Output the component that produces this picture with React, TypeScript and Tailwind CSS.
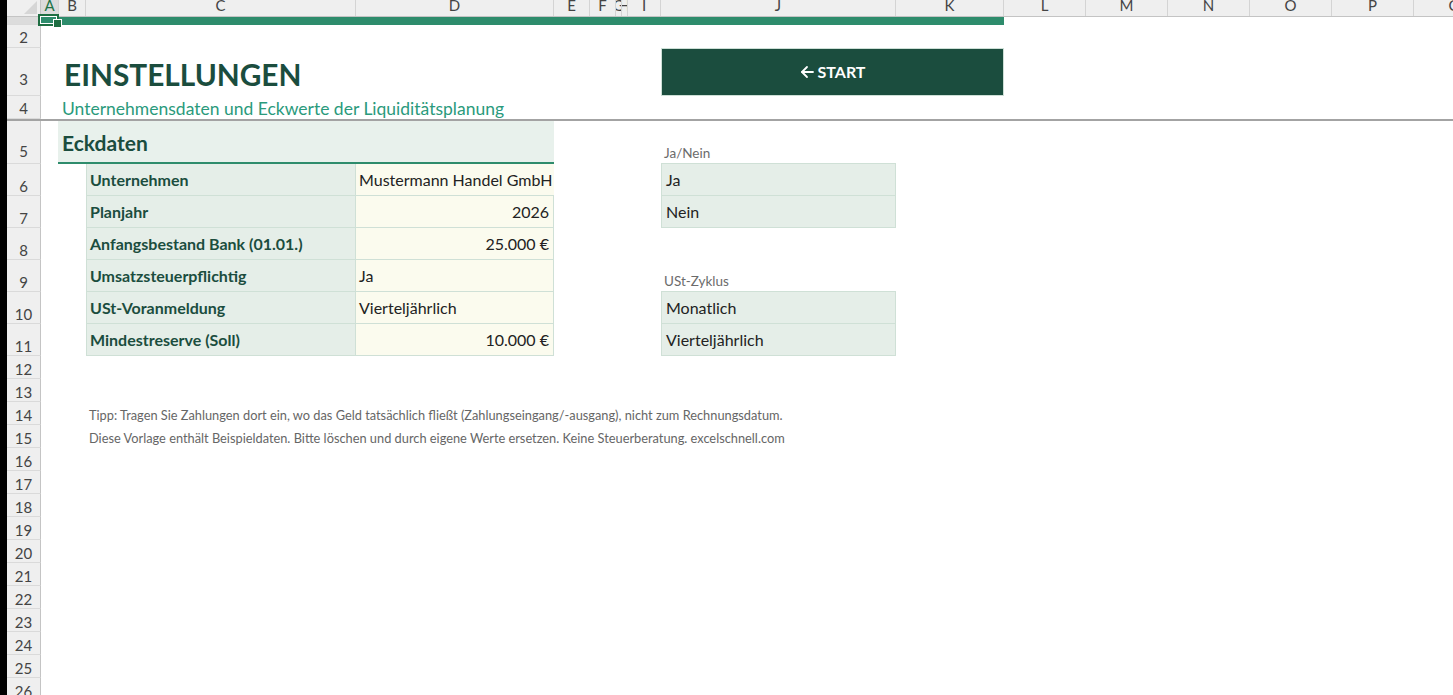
import React from "react";

const COLS: { k: string; w: string; sel?: boolean }[] = [
  { k: "A", w: "w-[18px]", sel: true },
  { k: "B", w: "w-[27px]" },
  { k: "C", w: "w-[270px]" },
  { k: "D", w: "w-[198px]" },
  { k: "E", w: "w-[36px]" },
  { k: "F", w: "w-[26px]" },
  { k: "G", w: "w-[6px]" },
  { k: "H", w: "w-[6px]" },
  { k: "I", w: "w-[33px]" },
  { k: "J", w: "w-[235px]" },
  { k: "K", w: "w-[108px]" },
  { k: "L", w: "w-[82px]" },
  { k: "M", w: "w-[82px]" },
  { k: "N", w: "w-[82px]" },
  { k: "O", w: "w-[82px]" },
  { k: "P", w: "w-[82px]" },
  { k: "Q", w: "w-[82px]" },
];

function ColumnHeader() {
  return (
    <div className="flex h-[17px] shrink-0 bg-[#efefef] border-b border-[#c4c4c4]">
      <div className="w-[34px] shrink-0 border-r border-[#c4c4c4] flex items-end justify-end pr-[3px] pb-[2px]">
        <svg width="14" height="13" viewBox="0 0 14 13">
          <polygon points="14,0 14,13 1,13" fill="#d6d6d6" />
        </svg>
      </div>
      {COLS.map((c) => (
        <div
          key={c.k}
          className={`${c.w} shrink-0 overflow-hidden flex justify-center items-end border-r border-[#d4d4d4] text-[15px] leading-[15px] pb-[3px] ${
            c.sel ? "bg-[#dcdcdc] text-[#217346]" : "text-[#444]"
          }`}
        >
          {c.k}
        </div>
      ))}
    </div>
  );
}

function Row({
  n,
  h,
  pb = "pb-[1px]",
  sel,
  children,
}: {
  n: string;
  h: string;
  pb?: string;
  sel?: boolean;
  children?: React.ReactNode;
}) {
  return (
    <div className={`flex shrink-0 ${h}`}>
      <div
        className={`w-[34px] shrink-0 overflow-hidden flex items-end justify-center border-r border-r-[#c4c4c4] border-b border-b-[#dadada] text-[15px] leading-[15px] text-[#444] ${pb} ${
          sel ? "bg-[#dcdcdc]" : "bg-[#efefef]"
        }`}
      >
        {n}
      </div>
      <div className="flex flex-1 min-w-0 relative">{children}</div>
    </div>
  );
}

function TableRow({
  n,
  label,
  value,
  right,
  first,
  jItem,
  jSmall,
}: {
  n: string;
  label: string;
  value: string;
  right?: boolean;
  first?: boolean;
  jItem?: string;
  jSmall?: string;
}) {
  return (
    <Row n={n} h="h-[32px]" pb="pb-[1px]">
      <div className="w-[45px] shrink-0" />
      <div className="w-[270px] shrink-0 bg-[#e5eee8] border-l border-r border-b border-[#cfe0d6] flex items-center pl-[3px] pt-[1px] text-[16px] font-bold text-[#1b4d3e] whitespace-nowrap">
        {label}
      </div>
      <div
        className={`w-[198px] shrink-0 bg-[#fbfbee] border-b border-[#cfe0d6] flex items-center pt-[1px] text-[16px] text-[#222] whitespace-nowrap ${
          right ? "justify-end pr-[4px]" : "pl-[3px]"
        } ${first ? "" : "border-r"}`}
      >
        {value}
      </div>
      <div className="w-[107px] shrink-0" />
      {jItem ? (
        <div className="w-[235px] shrink-0 bg-[#e5eee8] border-l border-r border-b border-[#cfe0d6] flex items-center pl-[4px] pt-[1px] text-[16px] text-[#222]">
          {jItem}
        </div>
      ) : jSmall ? (
        <div className="w-[235px] shrink-0 border-b border-[#cfe0d6] flex items-end pl-[3px] pb-[2px] text-[13.5px] leading-[15px] text-[#6b6b6b]">
          {jSmall}
        </div>
      ) : null}
    </Row>
  );
}

export default function App() {
  const empties = ["16", "17", "18", "19", "20", "21", "22", "23", "24", "25", "26"];
  return (
    <div className="w-[1453px] h-[695px] overflow-hidden flex bg-white font-['Lato','Noto_Sans',sans-serif]">
      <div className="w-[7px] shrink-0 bg-black" />
      <div className="flex-1 min-w-0 flex flex-col">
        <ColumnHeader />

        {/* Row 1 */}
        <Row n="" h="h-[8px]" sel>
          <div className="w-[963px] shrink-0 h-full bg-[#2e8c6c]" />
          {/* selected cell A1 */}
          <div className="absolute z-10 left-[-3px] top-[-3px] w-[21px] h-[12px] border-2 border-[#1e6e42]">
            <div className="h-full w-full border border-white" />
          </div>
          <div className="absolute z-10 left-[12px] top-[2px] w-[9px] h-[9px] bg-[#1e6e42] border border-white" />
        </Row>

        {/* Row 2 */}
        <Row n="2" h="h-[23px]" pb="pb-[2px]" />

        {/* Row 3 */}
        <Row n="3" h="h-[48px]" pb="pb-[8px]">
          <div className="w-[18px] shrink-0" />
          <div className="w-[602px] shrink-0 flex items-end pl-[5px] pb-[4px]">
            <span className="text-[29.8px] leading-[34px] font-bold text-[#1b4d3e] whitespace-nowrap">
              EINSTELLUNGEN
            </span>
          </div>
          <div className="w-[343px] shrink-0">
            <div className="h-full w-full bg-[#1b4d3e] border border-[#cddfd6] flex items-center justify-center gap-[4px] text-white text-[16px] font-bold">
              <svg width="14" height="14" viewBox="0 0 14 14" fill="none" stroke="white" strokeWidth="1.8" strokeLinecap="round" strokeLinejoin="round">
                <path d="M13 7H2" />
                <path d="M7 2L2 7l5 5" />
              </svg>
              <span>START</span>
            </div>
          </div>
        </Row>

        {/* Row 4 */}
        <Row n="4" h="h-[23px]" pb="pb-[2px]">
          <div className="w-[18px] shrink-0" />
          <div className="w-[602px] shrink-0 flex items-end pl-[3px]">
            <span className="text-[17.5px] leading-[21px] text-[#2a9a7c] whitespace-nowrap">
              Unternehmensdaten und Eckwerte der Liquiditätsplanung
            </span>
          </div>
        </Row>

        {/* freeze line */}
        <div className="h-[2px] shrink-0 bg-[#a3a3a3]" />

        {/* Row 5 */}
        <Row n="5" h="h-[43px]" pb="pb-[4px]">
          <div className="w-[17px] shrink-0" />
          <div className="w-[496px] shrink-0 bg-[#e8f1ec] border-b-2 border-[#2e8c6c] flex items-center pl-[4px] pt-[2px]">
            <span className="text-[21px] font-bold text-[#1b4d3e]">Eckdaten</span>
          </div>
          <div className="w-[107px] shrink-0" />
          <div className="w-[235px] shrink-0 border-b border-[#cfe0d6] flex items-end pl-[3px] pb-[2px] text-[13.5px] leading-[15px] text-[#6b6b6b]">
            Ja/Nein
          </div>
        </Row>

        <TableRow n="6" label="Unternehmen" value="Mustermann Handel GmbH" first jItem="Ja" />
        <TableRow n="7" label="Planjahr" value="2026" right jItem="Nein" />
        <TableRow n="8" label="Anfangsbestand Bank (01.01.)" value="25.000 €" right />
        <TableRow n="9" label="Umsatzsteuerpflichtig" value="Ja" jSmall="USt-Zyklus" />
        <TableRow n="10" label="USt-Voranmeldung" value="Vierteljährlich" jItem="Monatlich" />
        <TableRow n="11" label="Mindestreserve (Soll)" value="10.000 €" right jItem="Vierteljährlich" />

        <Row n="12" h="h-[23px]" />
        <Row n="13" h="h-[23px]" />
        <Row n="14" h="h-[23px]">
          <div className="w-[45px] shrink-0" />
          <div className="flex items-end pl-[3px] pb-[2px] text-[12.8px] leading-[15px] text-[#666] whitespace-nowrap">
            Tipp: Tragen Sie Zahlungen dort ein, wo das Geld tatsächlich fließt (Zahlungseingang/-ausgang), nicht zum Rechnungsdatum.
          </div>
        </Row>
        <Row n="15" h="h-[23px]">
          <div className="w-[45px] shrink-0" />
          <div className="flex items-end pl-[3px] pb-[2px] text-[12.8px] leading-[15px] text-[#666] whitespace-nowrap">
            Diese Vorlage enthält Beispieldaten. Bitte löschen und durch eigene Werte ersetzen. Keine Steuerberatung. excelschnell.com
          </div>
        </Row>
        {empties.map((n) => (
          <Row key={n} n={n} h="h-[23px]" />
        ))}
      </div>
    </div>
  );
}
